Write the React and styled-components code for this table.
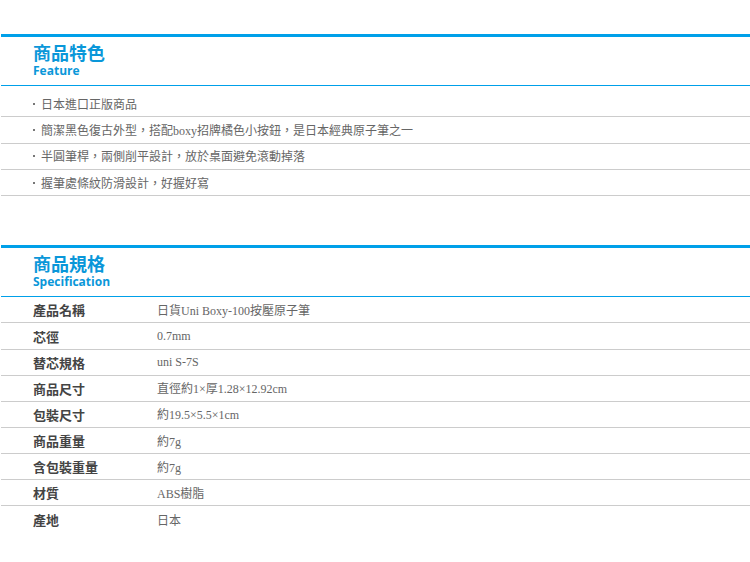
import React from 'react';
import styled, { createGlobalStyle } from 'styled-components';

const GlobalStyle = createGlobalStyle`
  body {
    margin: 0;
    background: #fff;
  }
`;

const Page = styled.div`
  width: 750px;
  padding: 34px 0 0 1px;
  box-sizing: border-box;
`;

const Section = styled.section`
  margin-bottom: ${(props) => props.gap || 0}px;
`;

const Header = styled.div`
  border-top: 3px solid #00a0e9;
  border-bottom: 1px solid #00a0e9;
  padding: 5px 0 0 32px;
  height: 52px;
  box-sizing: border-box;
  display: flex;
  flex-direction: column;
`;

const Title = styled.h2`
  margin: 0;
  font-family: 'Noto Sans CJK TC', sans-serif;
  font-weight: 700;
  font-size: 18px;
  line-height: 20px;
  color: #0a97d9;
`;

const Subtitle = styled.div`
  margin-top: 2px;
  font-family: 'Open Sans', 'Liberation Sans', sans-serif;
  font-weight: 700;
  font-size: 12px;
  line-height: 14px;
  color: #0a97d9;
`;

const List = styled.ul`
  list-style: none;
  margin: 0;
  padding: 5px 0 0 0;
`;

const Item = styled.li`
  display: flex;
  align-items: center;
  height: 26.33px;
  box-sizing: border-box;
  border-bottom: 1px solid #ccc;
  padding-left: 32px;
  font-family: 'Liberation Serif', 'Noto Sans CJK TC', serif;
  font-size: 12px;
  color: #666;

  &::before {
    content: '';
    width: 2px;
    height: 2px;
    background: #777;
    margin-right: 6px;
  }
`;

const Table = styled.div`
  display: flex;
  flex-direction: column;
`;

const Row = styled.div`
  display: grid;
  grid-template-columns: 124px 1fr;
  align-items: center;
  height: 26.15px;
  box-sizing: border-box;
  padding-left: 32px;
  border-bottom: ${(props) => (props.last ? 'none' : '1px solid #ccc')};
`;

const Label = styled.div`
  font-family: 'Noto Sans CJK TC', sans-serif;
  font-weight: 700;
  font-size: 13px;
  color: #444;
`;

const Value = styled.div`
  font-family: 'Liberation Serif', 'Noto Sans CJK TC', serif;
  font-size: 12px;
  color: #666;
`;

const features = [
  '日本進口正版商品',
  '簡潔黑色復古外型，搭配boxy招牌橘色小按鈕，是日本經典原子筆之一',
  '半圓筆桿，兩側削平設計，放於桌面避免滾動掉落',
  '握筆處條紋防滑設計，好握好寫',
];

const specs = [
  ['產品名稱', '日貨Uni Boxy-100按壓原子筆'],
  ['芯徑', '0.7mm'],
  ['替芯規格', 'uni S-7S'],
  ['商品尺寸', '直徑約1×厚1.28×12.92cm'],
  ['包裝尺寸', '約19.5×5.5×1cm'],
  ['商品重量', '約7g'],
  ['含包裝重量', '約7g'],
  ['材質', 'ABS樹脂'],
  ['產地', '日本'],
];

export default function App() {
  return (
    <Page>
      <GlobalStyle />
      <Section gap={49}>
        <Header>
          <Title>商品特色</Title>
          <Subtitle>Feature</Subtitle>
        </Header>
        <List>
          {features.map((text) => (
            <Item key={text}>{text}</Item>
          ))}
        </List>
      </Section>
      <Section>
        <Header>
          <Title>商品規格</Title>
          <Subtitle>Specification</Subtitle>
        </Header>
        <Table>
          {specs.map(([label, value], i) => (
            <Row key={label} last={i === specs.length - 1}>
              <Label>{label}</Label>
              <Value>{value}</Value>
            </Row>
          ))}
        </Table>
      </Section>
    </Page>
  );
}
